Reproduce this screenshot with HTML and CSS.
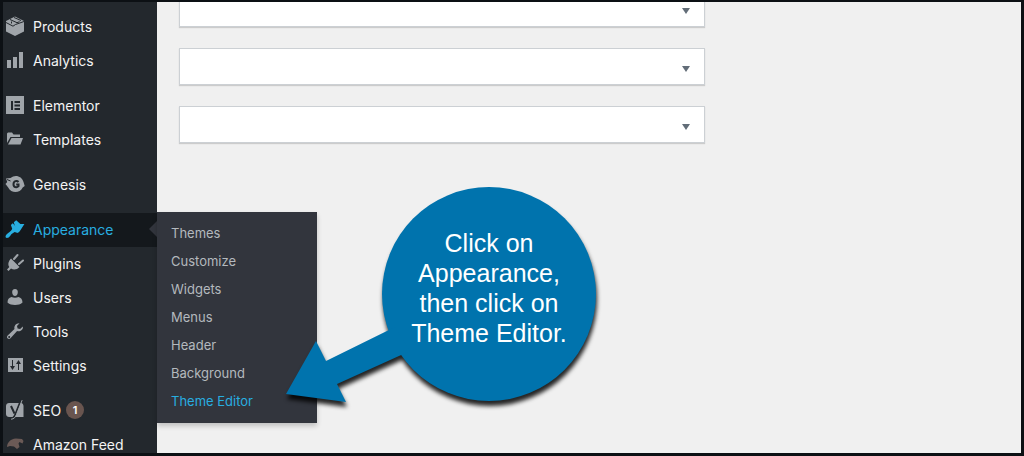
FILE: index.html
```
<!DOCTYPE html>
<html lang="en">
<head>
  <meta charset="UTF-8">
  <meta name="viewport" content="width=device-width, initial-scale=1.0">
  <title>Dashboard - Appearance</title>
  <link rel="stylesheet" href="styles.css">
</head>
<body>

<nav class="admin-menu" aria-label="Main menu">
  <ul class="menu">
    <li>
      <a class="menu-link" href="#products">
        <svg viewBox="0 0 20 20"><path d="M10 .5 19 5v10.500L10 20 1 15.500V5z"/><path class="cut thin" d="M1 6.500 8 10.200l2.500-1.700L19 5.500M5 3.500l7 3.200 2.500-1M9 1.500 16 4.500M6.500 5.500v2"/></svg>
        Products
      </a>
    </li>
    <li>
      <a class="menu-link" href="#analytics">
        <svg viewBox="0 0 20 20"><path d="M2 10h4v8H2zM8 7h4v11H8zM14 2h4v16h-4z"/></svg>
        Analytics
      </a>
    </li>
    <li class="separator">
      <a class="menu-link" href="#elementor">
        <svg viewBox="0 0 20 20"><path d="M1 1h18v18H1z"/><path class="dark" d="M6 6h2v9H6zM9.500 6H15v2H9.500zM9.500 9.500H15v2H9.500zM9.500 13H15v2H9.500z"/></svg>
        Elementor
      </a>
    </li>
    <li>
      <a class="menu-link" href="#templates">
        <svg viewBox="0 0 20 20"><path d="M2 14V4.500L3 3.500h4l1.500 2H15v2.500H5.500z"/><path d="M6.500 9H18l-2.500 6.500H3z"/></svg>
        Templates
      </a>
    </li>
    <li class="separator">
      <a class="menu-link" href="#genesis">
        <svg viewBox="0 0 20 20"><path d="M1 4.500 5.500 4C10 0 17 2 18.500 8l1.200 4-2 1.500C15 19.500 6 19.500 3.200 13.500L.5 10l1.700-2z"/><path class="cut" d="M13.500 8c-1.500-1.800-5-1.200-5 2.200s3.500 3.800 5 2v-1.700h-2.300"/><path class="cut thin" d="M2 5.500 5.500 7"/></svg>
        Genesis
      </a>
    </li>
    <li class="separator current">
      <a class="menu-link" href="#appearance" aria-current="page">
        <svg viewBox="0 0 20 20"><path d="m8.800 3.200 2.400-1.900 4.200 3.600 4 .1-4 6.300-1.700 2.300-2.200-1.400z"/><path d="m7.800 4.200 6.600 7.600-1.800 2.200-2.900-.9C8 14 6.500 15 5.500 16.500 4 19 1.500 19.500.8 18.500S.8 15.800 3.200 14c2-1.500 3.300-2.500 4-4.200L5.900 6z"/></svg>
        Appearance
      </a>
      <ul class="submenu">
        <li><a href="#themes">Themes</a></li>
        <li><a href="#customize">Customize</a></li>
        <li><a href="#widgets">Widgets</a></li>
        <li><a href="#menus">Menus</a></li>
        <li><a href="#header">Header</a></li>
        <li><a href="#background">Background</a></li>
        <li><a class="active" href="#theme-editor">Theme Editor</a></li>
      </ul>
    </li>
    <li>
      <a class="menu-link" href="#plugins">
        <svg viewBox="0 0 20 20"><path d="M6 5.500 14.500 14c-2.500 2.800-6 3.200-8.500 1.500L3.500 18 2 16.500 4.300 14C2.500 11.500 3.500 8 6 5.500z"/><path class="stroke" d="m9 6 3.500-4M14 11l4-3.500"/></svg>
        Plugins
      </a>
    </li>
    <li>
      <a class="menu-link" href="#users">
        <svg viewBox="0 0 20 20"><path d="M10 2c2 0 3 1.500 2.800 3.500C12.600 7.500 11.600 9 10 9S7.400 7.500 7.200 5.500C7 3.500 8 2 10 2zM6.500 10c2 1 5 1 7 0 2.500.5 4 2.500 4 5.500-2 1.800-4.500 2.500-7.500 2.500s-5.500-.7-7.500-2.500c0-3 1.500-5 4-5.500z"/></svg>
        Users
      </a>
    </li>
    <li>
      <a class="menu-link" href="#tools">
        <svg viewBox="0 0 20 20"><path d="M16.700 9c-1.300 1.300-3 1.500-4.600 1L5.500 17.200c-2 2-4.800-.6-2.800-2.700L9.500 8c-.8-3 1.500-6 5-5.800L12 5l.6 2.400 2.500.6 2.700-2.500c.3 1.300 0 2.600-1.100 3.500z"/><circle class="dark" cx="4.200" cy="16" r="1"/></svg>
        Tools
      </a>
    </li>
    <li>
      <a class="menu-link" href="#settings">
        <svg viewBox="0 0 20 20"><path d="M3 3h15v14H3z"/><path class="cut thin" d="M7.500 5v8M13.500 15V7"/><path class="dark" d="M5 11h5l-2.500 4zM11 9h5l-2.500-4z"/></svg>
        Settings
      </a>
    </li>
    <li class="separator">
      <a class="menu-link" href="#seo">
        <svg viewBox="0 0 20 20"><path d="M4 3h12c1.500 0 2.500 1.500 2.500 3v11H4c-1.500 0-3-1-3-3V6c0-2 1.500-3 3-3z"/><path class="cut" d="M16 0 10.500 14c-1 2.700-2.300 4.500-5 4.500M6 6l3.500 7.500"/><path class="stroke thin" d="m17 .5-5.500 14c-1 2.700-2.500 4.500-5 4.700"/></svg>
        SEO <span class="count">1</span>
      </a>
    </li>
    <li>
      <a class="menu-link" href="#amazon-feed">
        <svg class="brown" viewBox="0 0 20 20"><path d="M2 13C2 9 5 5 11 4.500l6 .5 1.500 2-1 2.500-3-1.500-1 1.500 1 3.500-2.500 2-3-2.500L5 12z"/></svg>
        Amazon Feed
      </a>
    </li>
  </ul>
</nav>

<main class="content">
  <div class="postbox"><button type="button" aria-label="Toggle first panel"></button></div>
  <div class="postbox"><button type="button" aria-label="Toggle second panel"></button></div>
  <div class="postbox"><button type="button" aria-label="Toggle third panel"></button></div>
</main>

<!-- Hint bubble over the page -->
<div class="callout">
  <svg viewBox="0 0 340 250" aria-hidden="true">
    <circle cx="219" cy="124" r="107"/>
    <path d="M16 224 46 171 56 191 125 157 140 181 67 214 76 232z"/>
  </svg>
  <p>Click on<br>Appearance,<br>then click on<br>Theme Editor.</p>
</div>

</body>
</html>
```
FILE: styles.css
```
* {
  box-sizing: border-box;
}
body {
  display: flex;
  position: relative;
  height: 100vh;
  margin: 0;
  overflow: hidden;
  border: 3px solid #0c1014;
  border-top-width: 2px;
  background-color: #f0f0f0;
  font-family: Inter, "Liberation Sans", sans-serif;
}
ul {
  list-style: none;
  margin: 0;
  padding: 0;
}
a {
  text-decoration: none;
}

/* Side menu */
.admin-menu {
  flex: 0 0 154px;
  background-color: #23282d;
}
.menu {
  padding-top: 8px;
}
.menu > li {
  position: relative;
}
.menu > .separator {
  margin-top: 11px;
}
.menu-link {
  display: flex;
  align-items: center;
  gap: 8px;
  height: 34px;
  padding: 0 0 2px 2px;
  color: #f4f4f4;
  font-size: 14px;
  white-space: nowrap;
}
.menu-link svg {
  flex: none;
  width: 20px;
  height: 20px;
  fill: #a0a5aa;
  overflow: visible;
}
.menu-link .cut {
  fill: none;
  stroke: #23282d;
  stroke-width: 2;
}
.menu-link .dark {
  fill: #23282d;
}
.menu-link .stroke {
  fill: none;
  stroke: #a0a5aa;
  stroke-width: 2;
  stroke-linecap: round;
}
.menu-link .thin {
  stroke-width: 1;
}
.menu-link .brown {
  fill: #6b5a56;
}
.current .menu-link {
  background-color: #14181c;
  color: #28aee0;
}
.current .menu-link svg {
  fill: #28aee0;
}
.current .menu-link::after {
  content: "";
  position: absolute;
  right: 0;
  border: 8px solid transparent;
  border-left-width: 0;
  border-right-color: #32353d;
}
.count {
  width: 18px;
  height: 18px;
  margin-left: -3px;
  border-radius: 50%;
  background-color: #69554f;
  color: #fff;
  font-size: 11px;
  font-weight: 600;
  line-height: 18px;
  text-align: center;
}

/* Fly-out menu */
.submenu {
  position: absolute;
  top: -1px;
  left: 100%;
  width: 160px;
  padding: 7px 0 8px;
  background-color: #32353d;
  box-shadow: 0 3px 5px rgba(0, 0, 0, 0.2);
}
.submenu a {
  display: block;
  padding: 0 14px;
  color: #b4b9be;
  font-size: 13px;
  line-height: 28px;
}
.submenu .active {
  color: #28aee0;
}

/* Collapsed panels */
.content {
  flex: 1;
  display: flex;
  flex-direction: column;
  gap: 21px;
  margin-top: -12px;
  padding: 0 22px;
}
.postbox {
  display: flex;
  justify-content: flex-end;
  max-width: 526px;
  height: 37px;
  border: 1px solid #ccd0d4;
  background-color: #fff;
  box-shadow: 0 1px 1px rgba(0, 0, 0, 0.15);
}
.postbox button {
  display: flex;
  align-items: center;
  justify-content: center;
  width: 36px;
  padding: 4px 0 0;
  border: 0;
  background: none;
}
.postbox button::before {
  content: "";
  border: 4px solid transparent;
  border-top: 6px solid #626d78;
  border-bottom: 0;
}

/* Hint bubble */
.callout {
  position: absolute;
  top: 168px;
  left: 267px;
  width: 340px;
  height: 250px;
  color: #fff;
  font-family: "Liberation Sans", Arial, sans-serif;
  font-size: 25px;
  line-height: 30px;
  text-align: center;
}
.callout svg {
  display: block;
  fill: #0073ad;
  overflow: visible;
  filter: drop-shadow(1px 5px 2px rgba(0, 0, 0, 0.85));
}
.callout p {
  position: absolute;
  top: 58px;
  left: 110px;
  width: 218px;
  margin: 0;
}
```
